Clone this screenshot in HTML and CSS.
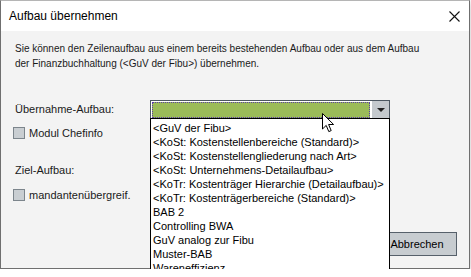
FILE: index.html
```html
<!DOCTYPE html>
<html>

<head>
    <meta charset="UTF-8">
    <title>Aufbau übernehmen</title>
    <link rel="stylesheet" href="styles.css">
</head>

<body>
    <div class="dialog">
        <div class="titlebar">
            <span class="title">Aufbau übernehmen</span>
            <svg class="close" width="11" height="11" viewBox="0 0 11 11">
                <path d="M0.5 0.5 L10.5 10.5 M10.5 0.5 L0.5 10.5" stroke="#111" stroke-width="1.1" fill="none"/>
            </svg>
        </div>
        <div class="content">
            <p class="intro">Sie können den Zeilenaufbau aus einem bereits bestehenden Aufbau oder aus dem Aufbau<br>der Finanzbuchhaltung (&lt;GuV der Fibu&gt;) übernehmen.</p>

            <div class="field-row">
                <label class="field-label">Übernahme-Aufbau:</label>
                <div class="combo">
                    <div class="combo-value"></div>
                    <div class="combo-button"><span class="arrow"></span></div>
                    <ul class="combo-list">
                        <li>&lt;GuV der Fibu&gt;</li>
                        <li>&lt;KoSt: Kostenstellenbereiche (Standard)&gt;</li>
                        <li>&lt;KoSt: Kostenstellengliederung nach Art&gt;</li>
                        <li>&lt;KoSt: Unternehmens-Detailaufbau&gt;</li>
                        <li>&lt;KoTr: Kostenträger Hierarchie (Detailaufbau)&gt;</li>
                        <li>&lt;KoTr: Kostenträgerbereiche (Standard)&gt;</li>
                        <li>BAB 2</li>
                        <li>Controlling BWA</li>
                        <li>GuV analog zur Fibu</li>
                        <li>Muster-BAB</li>
                        <li>Wareneffizienz</li>
                    </ul>
                    <svg class="cursor" width="13" height="20" viewBox="0 0 13 20">
                        <path d="M0.5 0.5 L0.5 16 L4.2 12.4 L6.8 18.6 L9.2 17.6 L6.6 11.5 L11.6 11.5 Z" fill="#fff" stroke="#000" stroke-width="1" stroke-linejoin="round"/>
                    </svg>
                </div>
            </div>

            <div class="check-row first">
                <span class="checkbox"></span>
                <span>Modul Chefinfo</span>
            </div>

            <div class="section-label">Ziel-Aufbau:</div>

            <div class="check-row">
                <span class="checkbox"></span>
                <span>mandantenübergreif.</span>
            </div>

            <div class="button-row">
                <button class="btn">Abbrechen</button>
            </div>
        </div>
    </div>
</body>
</html>
```

FILE: styles.css
```css
body {
    margin: 0;
    background-color: #ffffff;
    font-family: "Liberation Sans", Arial, sans-serif;
    font-size: 11px;
    color: #1a1a1a;
}

.dialog {
    width: 468px;
    height: 267px;
    border: 1px solid #6f6f6f;
    border-top-color: #b5b5b5;
    display: flex;
    flex-direction: column;
    box-shadow: 0 2px 8px rgba(0,0,0,0.25);
}

.titlebar {
    height: 30px;
    background-color: #ffffff;
    display: flex;
    align-items: center;
    justify-content: space-between;
    padding: 0 9px 0 8px;
}

.title {
    font-size: 12px;
    color: #000;
}

.close {
    display: block;
    margin-top: 1px;
}

.content {
    flex: 1;
    background-color: #f3f3f3;
    display: flex;
    flex-direction: column;
    padding: 10px 12px 12px 12px;
}

.intro {
    margin: 0 0 0 2px;
    font-size: 10px;
    line-height: 15px;
    white-space: nowrap;
}

.field-row {
    display: flex;
    align-items: center;
    margin-top: 29px;
    height: 19px;
}

.field-label {
    width: 135px;
    padding-left: 2px;
    line-height: 13px;
}

.combo {
    position: relative;
    width: 240px;
    height: 19px;
    border: 1px solid #4b5660;
    background-color: #fff;
    display: flex;
    padding: 1px 0 0 1px;
    box-sizing: border-box;
}

.combo-value {
    flex: 1;
    height: 14px;
    background-color: #9bbb59;
    border: 1px dotted #5b3aa8;
    margin-right: 2px;
}

.combo-button {
    width: 17px;
    background-color: #c4c9cd;
    margin-top: -1px;
    display: flex;
    align-items: center;
    justify-content: center;
}

.arrow {
    width: 0;
    height: 0;
    border-left: 4px solid transparent;
    border-right: 4px solid transparent;
    border-top: 4px solid #222;
    margin-left: 1px;
}

.combo-list {
    position: absolute;
    left: -1px;
    top: 17px;
    width: 240px;
    margin: 0;
    padding: 2px 0 1px 0;
    list-style: none;
    background-color: #fff;
    border: 1px solid #000;
    box-sizing: border-box;
    z-index: 2;
}

.combo-list li {
    height: 14px;
    line-height: 14px;
    padding-left: 2px;
    color: #000;
    white-space: nowrap;
}

.cursor {
    position: absolute;
    left: 171px;
    top: 12px;
    z-index: 3;
}

.check-row {
    display: flex;
    align-items: center;
    gap: 4px;
    height: 13px;
    margin-top: 11px;
}

.check-row.first {
    margin-top: 7px;
}

.checkbox {
    width: 10px;
    height: 10px;
    background-color: #c9ced2;
    border: 1px solid #7c858c;
}

.section-label {
    margin-top: 25px;
    padding-left: 2px;
    line-height: 13px;
}

.button-row {
    margin-top: auto;
    display: flex;
    justify-content: flex-end;
}

.btn {
    width: 80px;
    height: 24px;
    font-family: "Liberation Sans", Arial, sans-serif;
    font-size: 11px;
    color: #000;
    background-color: #c7ccd0;
    border: 1px solid #56606a;
    padding: 0;
}
```
